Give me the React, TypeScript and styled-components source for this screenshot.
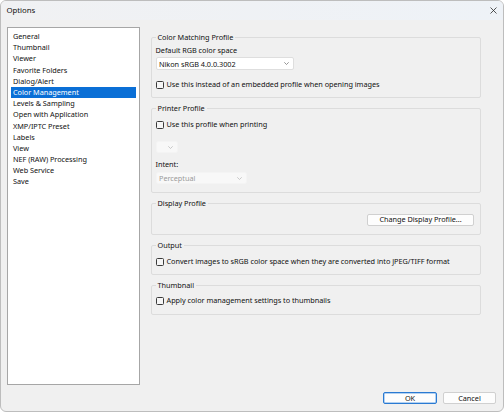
import React from 'react'
import styled, { createGlobalStyle } from 'styled-components'

const GlobalStyle = createGlobalStyle`
  html, body {
    margin: 0;
    padding: 0;
    background: #ffffff;
  }
  body {
    font-family: 'Noto Sans', 'Open Sans', sans-serif;
    font-size: 7.3px;
    letter-spacing: -0.03px;
    color: #111111;
  }
`

const Window = styled.div`
  width: 504px;
  height: 412px;
  box-sizing: border-box;
  border: 1px solid #bdbdbd;
  border-radius: 6px;
  overflow: hidden;
  background: #f0f0f0;
  display: flex;
  flex-direction: column;
`

const TitleBar = styled.div`
  height: 19px;
  flex: none;
  display: flex;
  align-items: center;
  justify-content: space-between;
  padding: 0 6px 0 5.5px;
  background: linear-gradient(90deg, #f0f1f3 0%, #eef2f7 100%);
`

const Title = styled.span`
  font-size: 7.8px;
  line-height: 11px;
`

const CloseButton = styled.div`
  width: 7px;
  height: 7px;
  display: flex;
`

const Body = styled.div`
  display: flex;
  gap: 11px;
  padding: 7px 22px 0 6px;
`

const List = styled.ul`
  list-style: none;
  margin: 0;
  padding: 3px 3px;
  width: 133px;
  height: 358px;
  box-sizing: border-box;
  flex: none;
  background: #ffffff;
  border: 1px solid #a6a6a6;
`

const ListItem = styled.li<{ $selected?: boolean }>`
  height: 11.2px;
  line-height: 11.2px;
  padding: 0 2px;
  white-space: nowrap;
  background: ${({ $selected }) => ($selected ? '#0a6fd6' : 'transparent')};
  color: ${({ $selected }) => ($selected ? '#ffffff' : '#111111')};
`

const Panel = styled.div`
  width: 330px;
  display: flex;
  flex-direction: column;
  gap: 5px;
  margin-top: 5px;
`

const Group = styled.fieldset<{ $bottom: number }>`
  margin: 0;
  padding: 0 6px ${({ $bottom }) => $bottom}px 3.5px;
  border: 1px solid #dcdcdc;
  border-radius: 2px;
  min-width: 0;
  display: flex;
  flex-direction: column;
  align-items: flex-start;
`

const Legend = styled.legend`
  padding: 0 2px;
  margin: 0;
  line-height: 11px;
`

const Label = styled.div<{ $top: number }>`
  line-height: 11px;
  margin-top: ${({ $top }) => $top}px;
`

const Select = styled.div<{ $top: number; $width: number; $height: number; $disabled?: boolean }>`
  margin-top: ${({ $top }) => $top}px;
  width: ${({ $width }) => $width}px;
  height: ${({ $height }) => $height}px;
  box-sizing: border-box;
  display: flex;
  align-items: center;
  justify-content: space-between;
  padding: 0 4px 0 2.5px;
  border-radius: 2px;
  background: ${({ $disabled }) => ($disabled ? '#f8f8f8' : '#ffffff')};
  border: 1px solid ${({ $disabled }) => ($disabled ? '#f4f4f4' : '#dedede')};
  color: ${({ $disabled }) => ($disabled ? '#9b9b9b' : '#111111')};
`

const Chevron = ({ color }: { color: string }) => (
  <svg width="5" height="3" viewBox="0 0 5 3" style={{ flex: 'none', marginLeft: 'auto' }}>
    <path d="M0.3 0.3 L2.5 2.5 L4.7 0.3" fill="none" stroke={color} strokeWidth="0.7" />
  </svg>
)

const CheckRow = styled.label<{ $top: number }>`
  display: flex;
  align-items: center;
  gap: 3px;
  line-height: 11px;
  margin-top: ${({ $top }) => $top}px;
  white-space: nowrap;
`

const CheckBox = styled.span`
  width: 8px;
  height: 8px;
  box-sizing: border-box;
  border: 1px solid #3a3a3a;
  border-radius: 1.5px;
  background: #f5f5f5;
  flex: none;
`

const Button = styled.div<{ $primary?: boolean; $width: number }>`
  width: ${({ $width }) => $width}px;
  height: 12px;
  box-sizing: border-box;
  display: flex;
  align-items: center;
  justify-content: center;
  background: #fdfdfd;
  border: 1px solid ${({ $primary }) => ($primary ? '#2a7ad2' : '#d0d0d0')};
  box-shadow: ${({ $primary }) => ($primary ? 'inset 0 0 0 0.5px #6aa6e6' : 'none')};
  border-radius: 2px;
  line-height: 11px;
`

const RightButtonRow = styled.div`
  align-self: stretch;
  display: flex;
  justify-content: flex-end;
  margin-top: 4.5px;
`

const Footer = styled.div`
  display: flex;
  justify-content: flex-end;
  gap: 6px;
  padding: 7px 7px 0 0;
`

const items = [
  'General',
  'Thumbnail',
  'Viewer',
  'Favorite Folders',
  'Dialog/Alert',
  'Color Management',
  'Levels & Sampling',
  'Open with Application',
  'XMP/IPTC Preset',
  'Labels',
  'View',
  'NEF (RAW) Processing',
  'Web Service',
  'Save',
]

export default function App() {
  return (
    <>
      <GlobalStyle />
      <Window>
        <TitleBar>
          <Title>Options</Title>
          <CloseButton>
            <svg width="7" height="7" viewBox="0 0 7 7">
              <path d="M0.5 0.5 L6.5 6.5 M6.5 0.5 L0.5 6.5" stroke="#2b2b2b" strokeWidth="0.8" />
            </svg>
          </CloseButton>
        </TitleBar>
        <Body>
          <List>
            {items.map((it) => (
              <ListItem key={it} $selected={it === 'Color Management'}>
                {it}
              </ListItem>
            ))}
          </List>
          <Panel>
            <Group $bottom={7}>
              <Legend>Color Matching Profile</Legend>
              <Label $top={2}>Default RGB color space</Label>
              <Select $top={1} $width={138} $height={13}>
                Nikon sRGB 4.0.0.3002
                <Chevron color="#6a6a6a" />
              </Select>
              <CheckRow $top={9}>
                <CheckBox />
                Use this instead of an embedded profile when opening images
              </CheckRow>
            </Group>
            <Group $bottom={8}>
              <Legend>Printer Profile</Legend>
              <CheckRow $top={5}>
                <CheckBox />
                Use this profile when printing
              </CheckRow>
              <Select $top={11} $width={22} $height={12} $disabled>
                <Chevron color="#b4b4b4" />
              </Select>
              <Label $top={6}>Intent:</Label>
              <Select $top={2} $width={91} $height={12} $disabled>
                Perceptual
                <Chevron color="#b4b4b4" />
              </Select>
            </Group>
            <Group $bottom={8.5}>
              <Legend>Display Profile</Legend>
              <RightButtonRow>
                <Button $width={107}>Change Display Profile...</Button>
              </RightButtonRow>
            </Group>
            <Group $bottom={7}>
              <Legend>Output</Legend>
              <CheckRow $top={5}>
                <CheckBox />
                Convert images to sRGB color space when they are converted into JPEG/TIFF format
              </CheckRow>
            </Group>
            <Group $bottom={8}>
              <Legend>Thumbnail</Legend>
              <CheckRow $top={4}>
                <CheckBox />
                Apply color management settings to thumbnails
              </CheckRow>
            </Group>
          </Panel>
        </Body>
        <Footer>
          <Button $primary $width={54}>OK</Button>
          <Button $width={53}>Cancel</Button>
        </Footer>
      </Window>
    </>
  )
}
